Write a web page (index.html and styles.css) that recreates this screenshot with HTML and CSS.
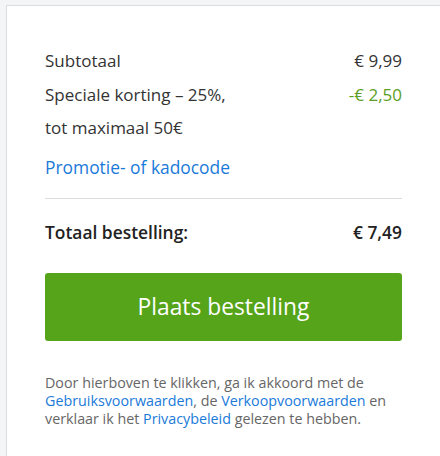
FILE: index.html
```html
<!DOCTYPE html>
<html lang="nl">
<head>
<meta charset="utf-8">
<link rel="stylesheet" href="styles.css">
</head>
<body>
<div class="card">
  <div class="rows">
    <div class="row">
      <span class="label">Subtotaal</span>
      <span class="amount">€ 9,99</span>
    </div>
    <div class="row">
      <span class="label">Speciale korting – 25%,<br>tot maximaal 50€</span>
      <span class="amount discount">-€ 2,50</span>
    </div>
    <a class="promo" href="#">Promotie- of kadocode</a>
  </div>
  <div class="total">
    <span>Totaal bestelling:</span>
    <span>€ 7,49</span>
  </div>
  <button class="order">Plaats bestelling</button>
  <p class="terms">Door hierboven te klikken, ga ik akkoord met de <a href="#">Gebruiksvoorwaarden</a>, de <a href="#">Verkoopvoorwaarden</a> en verklaar ik het <a href="#">Privacybeleid</a> gelezen te hebben.</p>
</div>
</body>
</html>
```
FILE: styles.css
```css
html, body {
  margin: 0;
  padding: 0;
}
body {
  background: #f4f5f7;
  font-family: "Open Sans", "Liberation Sans", sans-serif;
  color: #333;
  padding: 5px 0 0 6px;
  height: 456px;
  box-sizing: border-box;
  overflow: hidden;
  display: flex;
  flex-direction: column;
}
.card {
  flex: 1;
  background: #fff;
  border-top: 1px solid #dcdde0;
  border-left: 1px solid #dcdde0;
  padding: 38px 38px 0 38px;
}
.rows {
  display: flex;
  flex-direction: column;
  padding-bottom: 20px;
  border-bottom: 1px solid #dcdcdc;
}
.row {
  display: flex;
  justify-content: space-between;
  align-items: flex-start;
  font-size: 17px;
  line-height: 33.5px;
}
.discount {
  color: #5a9e24;
}
.promo {
  font-size: 17.4px;
  line-height: 22px;
  color: #1a7ad9;
  text-decoration: none;
  margin-top: 11px;
  align-self: flex-start;
}
.total {
  display: flex;
  justify-content: space-between;
  font-weight: 600;
  font-size: 17.4px;
  line-height: 22px;
  padding: 22px 0 0;
  color: #222;
}
.order {
  display: block;
  width: 100%;
  margin-top: 30px;
  height: 68px;
  border: none;
  border-radius: 3px;
  background: #55a41a;
  color: #fff;
  font-family: inherit;
  font-size: 22.8px;
  padding: 0;
}
.terms {
  margin: 33px 0 0;
  font-size: 14.3px;
  line-height: 18px;
  color: #666;
}
.terms a {
  color: #1a7ad9;
  text-decoration: none;
}
```
